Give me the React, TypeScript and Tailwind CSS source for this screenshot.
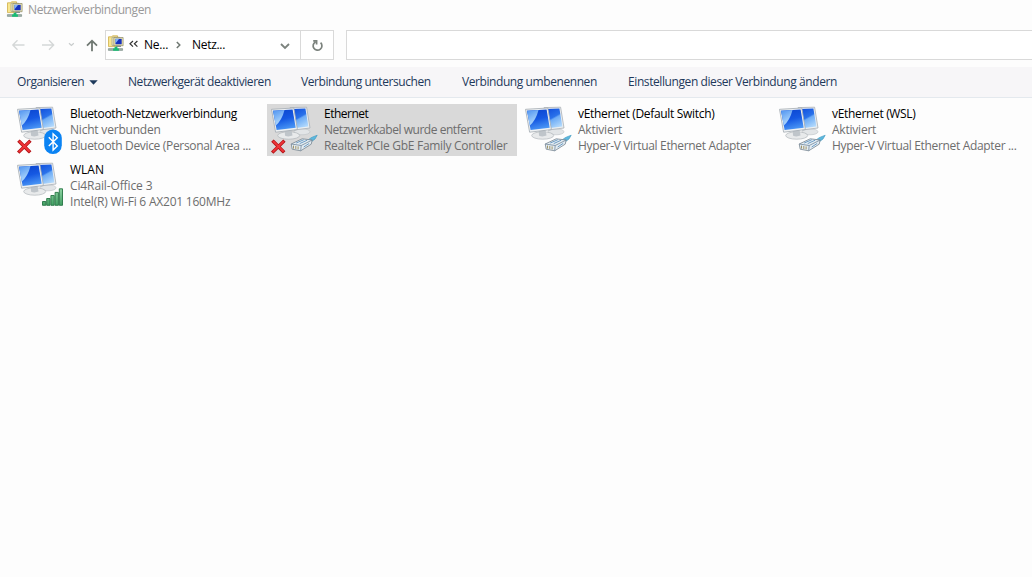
import React from "react";

type Badge = "bluetooth" | "plug" | "wifi";

interface Connection {
  name: string;
  status: string;
  device: string;
  badge: Badge;
  off?: boolean;
  selected?: boolean;
  tracking: [string, string, string];
}

const connections: Connection[] = [
  {
    name: "Bluetooth-Netzwerkverbindung",
    status: "Nicht verbunden",
    device: "Bluetooth Device (Personal Area ...",
    badge: "bluetooth",
    off: true,
    tracking: ["tracking-[-0.32px]", "tracking-[-0.2px]", "tracking-[-0.33px]"],
  },
  {
    name: "Ethernet",
    status: "Netzwerkkabel wurde entfernt",
    device: "Realtek PCIe GbE Family Controller",
    badge: "plug",
    off: true,
    selected: true,
    tracking: ["tracking-[-0.5px]", "tracking-[-0.46px]", "tracking-[-0.3px]"],
  },
  {
    name: "vEthernet (Default Switch)",
    status: "Aktiviert",
    device: "Hyper-V Virtual Ethernet Adapter",
    badge: "plug",
    tracking: ["tracking-[-0.32px]", "tracking-[-0.22px]", "tracking-[-0.34px]"],
  },
  {
    name: "vEthernet (WSL)",
    status: "Aktiviert",
    device: "Hyper-V Virtual Ethernet Adapter ...",
    badge: "plug",
    tracking: ["tracking-[-0.33px]", "tracking-[-0.22px]", "tracking-[-0.33px]"],
  },
  {
    name: "WLAN",
    status: "Ci4Rail-Office 3",
    device: "Intel(R) Wi-Fi 6 AX201 160MHz",
    badge: "wifi",
    tracking: ["tracking-normal", "tracking-[-0.12px]", "tracking-[-0.22px]"],
  },
];

function Gradients() {
  return (
    <svg width="0" height="0" className="absolute" aria-hidden="true">
      <defs>
        <linearGradient id="screen" x1="0.3" y1="0" x2="0.8" y2="1">
          <stop offset="0" stopColor="#1453de" />
          <stop offset="0.42" stopColor="#2a72ea" />
          <stop offset="0.5" stopColor="#6cabf6" />
          <stop offset="1" stopColor="#b9defd" />
        </linearGradient>
        <linearGradient id="screenFront" x1="0.2" y1="0" x2="0.5" y2="1">
          <stop offset="0" stopColor="#0b45cf" />
          <stop offset="0.5" stopColor="#1558e2" />
          <stop offset="1" stopColor="#4b97f5" />
        </linearGradient>
        <linearGradient id="glare" x1="0" y1="0" x2="0.4" y2="1">
          <stop offset="0" stopColor="#4d92f0" />
          <stop offset="1" stopColor="#b5dcfd" />
        </linearGradient>
        <linearGradient id="bars" x1="0" y1="0" x2="0" y2="1">
          <stop offset="0" stopColor="#8fd3a3" />
          <stop offset="1" stopColor="#43a064" />
        </linearGradient>
      </defs>
    </svg>
  );
}

function ConnectionIcon({ badge, off }: { badge: Badge; off?: boolean }) {
  return (
    <svg width="50" height="50" viewBox="0 0 50 50" className="block shrink-0">
      <ellipse cx="32" cy="26.8" rx="8" ry="3" fill="#e2e5e7" stroke="#bcc1c5" strokeWidth=".6" />
      <path d="M20 2.6 36.6 2.2 40 23 24 25z" fill="#eceff1" stroke="#a8afb5" strokeWidth=".8" />
      <path d="M21 4 35.4 3.6 38.4 21.6 24 23.2z" fill="url(#screen)" />
      <ellipse cx="18.7" cy="30.5" rx="11" ry="3.7" fill="#e8eaeb" stroke="#b0b6ba" strokeWidth=".7" />
      <path d="M14.5 25h7l1 5.6q-3.8 1.5-7.4.2z" fill="#bfc5ca" />
      <path d="M1.5 4.3 23.8 3 27.4 24.6 5.6 27.2z" fill="#eef1f3" stroke="#a3abb1" strokeWidth=".8" />
      <path d="M3 5.7 22.6 4.6 25.7 22.8 6.6 25z" fill="url(#screenFront)" />
      <path d="M3 5.7 14.5 5 Q12 15 5.8 20.6z" fill="url(#glare)" />
      {off && (
        <g strokeLinecap="square">
          <path d="M3.6 36.8 13 46.2M13.2 36.8 3.4 46.4" stroke="#b31316" strokeWidth="3.4" />
          <path d="M3.7 36.8 13 46M13.1 36.8 3.5 46.2" stroke="#ee3438" strokeWidth="1.9" />
        </g>
      )}
      {badge === "bluetooth" && (
        <g>
          <rect x="28.2" y="24.4" width="17.6" height="24.6" rx="8.7" fill="#0b83f3" />
          <path d="M32.8 32.3 41.3 41 37.1 45V28.8l4.2 4-8.5 8.2" fill="none" stroke="#fff" strokeWidth="1.4" />
        </g>
      )}
      {badge === "plug" && (
        <g strokeLinejoin="round" transform="translate(-1.8 0)">
          <path d="M38 36 44 32.2 49 30.2 46.8 34 41.5 38z" fill="#5db9df" stroke="#3b96bd" strokeWidth=".6" />
          <path d="M23 39 34 33.8 44 35 43 39.2 32.5 45.8 24 44.2z" fill="#e3ecf2" stroke="#76848f" strokeWidth=".8" />
          <path d="M23 39 33 40.5 44 35M33 40.5 32.5 45.8" fill="none" stroke="#72879a" strokeWidth=".8" />
          <path d="M25.3 40.6v3M27.6 41v3M29.9 41.4v3" stroke="#a19568" strokeWidth="1" />
          <path d="M28 38 35.5 34.8M31.5 38.6 39 35.2M35.5 42 41 38.4" stroke="#6d9cc4" strokeWidth="1" />
        </g>
      )}
      {badge === "wifi" && (
        <g fill="url(#bars)" stroke="#257443" strokeWidth=".9" transform="translate(0 -4)">
          <path d="M26.5 44.5h3.3v3.8h-3.3zM30.7 41.5H34v6.8h-3.3zM34.9 38.5h3.3v9.8h-3.3zM39.1 35.4h3.3v12.9h-3.3zM43.3 31.8h3.2v16.5h-3.2z" />
        </g>
      )}
    </svg>
  );
}

function FolderIcon() {
  return (
    <svg width="18" height="18" viewBox="0 0 18 18" className="block shrink-0">
      <path d="M1.5 1.8h3l1-1h5v10.8h-9z" fill="#f8e68f" stroke="#cfae49" strokeWidth=".8" />
      <path d="M5 2.2h7.5v8.2H5z" fill="#f2eab9" stroke="#8f9187" strokeWidth=".6" />
      <path d="M6.9 2.5h9.2v8.2H6.9z" fill="#f0e9b4" stroke="#8b8764" strokeWidth=".7" />
      <path d="M8.4 3.8h6.3v5.5H8.4z" fill="#1731bd" />
      <path d="M8.4 3.8h3.8L8.4 8.5z" fill="#83b4f5" />
      <path d="M9 10.8h5v1.2H9z" fill="#858d91" />
      <path d="M1.4 13.6h14.2v1.8H1.4z" fill="#a4b3ad" stroke="#61766c" strokeWidth=".5" />
      <path d="M7.6 11.7h2.8v1.7h1.5v2.4H6.1v-2.4h1.5z" fill="#15bd72" />
    </svg>
  );
}

function ConnectionTile({ c }: { c: Connection }) {
  return (
    <div className={`flex h-[52px] w-[250px] pt-px pl-[3px] ${c.selected ? "bg-[#d9d9d9]" : ""}`}>
      <ConnectionIcon badge={c.badge} off={c.off} />
      <div className="flex flex-col pt-px pl-1 leading-4 whitespace-nowrap text-[#6d6d6d]">
        <span className={`self-start text-black ${c.tracking[0]}`}>{c.name}</span>
        <span className={`self-start ${c.tracking[1]}`}>{c.status}</span>
        <span className={`self-start ${c.tracking[2]}`}>{c.device}</span>
      </div>
    </div>
  );
}

export default function App() {
  return (
    <div className="flex h-[577px] w-[1032px] flex-col overflow-hidden bg-[#fdfdfd] font-['Open_Sans',sans-serif] text-[12px] whitespace-nowrap text-black">
      <Gradients />
      <header className="flex h-5 items-center pl-1.5 text-[#999]">
        <FolderIcon />
        <h1 className="pl-1 tracking-[-0.4px]">Netzwerkverbindungen</h1>
      </header>
      <div className="flex h-[47px] items-start pt-2.5">
        <nav className="flex h-[30px] w-[105px] shrink-0 items-center">
          <svg width="105" height="30" viewBox="0 0 105 30" fill="none">
            <path d="M24.5 15H13M17.5 10.3 12.8 15l4.7 4.7M42 15h11.5M49 10.3l4.7 4.7-4.7 4.7" stroke="#d4d7d7" strokeWidth="1.3" />
            <path d="m69 13.2 2.4 2.3 2.4-2.3" stroke="#c8cccc" strokeWidth="1.2" />
            <path d="M92 21.3V10.7M87 15.7l5-5 5 5" stroke="#6f7872" strokeWidth="1.8" />
          </svg>
        </nav>
        <div className="flex h-[30px] w-[229px] shrink-0 border border-[#d9d9d9] bg-white">
          <div className="flex w-[195px] items-center border-r border-[#d9d9d9]">
            <div className="pb-0.5 pl-px"><FolderIcon /></div>
            <svg width="12" height="12" viewBox="0 0 12 12" fill="none" stroke="#333" strokeWidth="1.2" className="ml-0.5">
              <path d="M6 2 3 4.8l3 2.8M10.4 2 7.4 4.8l3 2.8" />
            </svg>
            <span className="ml-[5px] w-[31px] tracking-[-0.2px]">Ne...</span>
            <svg width="8" height="10" viewBox="0 0 8 10" fill="none" stroke="#6f7872" strokeWidth="1.5">
              <path d="m1.8 2 3 3-3 3" />
            </svg>
            <span className="ml-[9px] tracking-[-0.3px]">Netz...</span>
            <svg width="12" height="10" viewBox="0 0 12 10" fill="none" stroke="#7b827d" strokeWidth="1.8" className="mr-[9px] ml-auto">
              <path d="m2 4 4 4 4-4" />
            </svg>
          </div>
          <div className="flex flex-1 items-center justify-center">
            <svg width="14" height="14" viewBox="0 0 14 14" fill="none" stroke="#7b827d" strokeWidth="1.7">
              <path d="M10.6 4.6A4.4 4.4 0 1 1 5.4 3.9M3.2 2.8h3.4v3.6" />
            </svg>
          </div>
        </div>
        <div className="ml-3 h-[30px] flex-1 border border-r-0 border-[#d9d9d9] bg-white" />
      </div>
      <div className="flex h-[31px] shrink-0 items-center border-b border-[#e4e9ee] bg-[#f7f6f8] pl-[17px] text-[#1e395b]">
        <span className="w-[72px] shrink-0 tracking-[-0.42px]">Organisieren</span>
        <svg width="9" height="5" viewBox="0 0 9 5" className="mr-[30px] shrink-0">
          <path d="M.3.3h8.4L4.5 4.7z" fill="#1e395b" />
        </svg>
        <span className="w-[173px] shrink-0 tracking-[-0.44px]">Netzwerkgerät deaktivieren</span>
        <span className="w-[161px] shrink-0 tracking-[-0.43px]">Verbindung untersuchen</span>
        <span className="w-[166px] shrink-0 tracking-[-0.42px]">Verbindung umbenennen</span>
        <span className="tracking-[-0.41px]">Einstellungen dieser Verbindung ändern</span>
      </div>
      <main className="grid grid-cols-[repeat(4,250px)] gap-x-1 gap-y-1 pt-1.5 pl-[13px]">
        {connections.map((c) => (
          <ConnectionTile key={c.name} c={c} />
        ))}
      </main>
    </div>
  );
}
